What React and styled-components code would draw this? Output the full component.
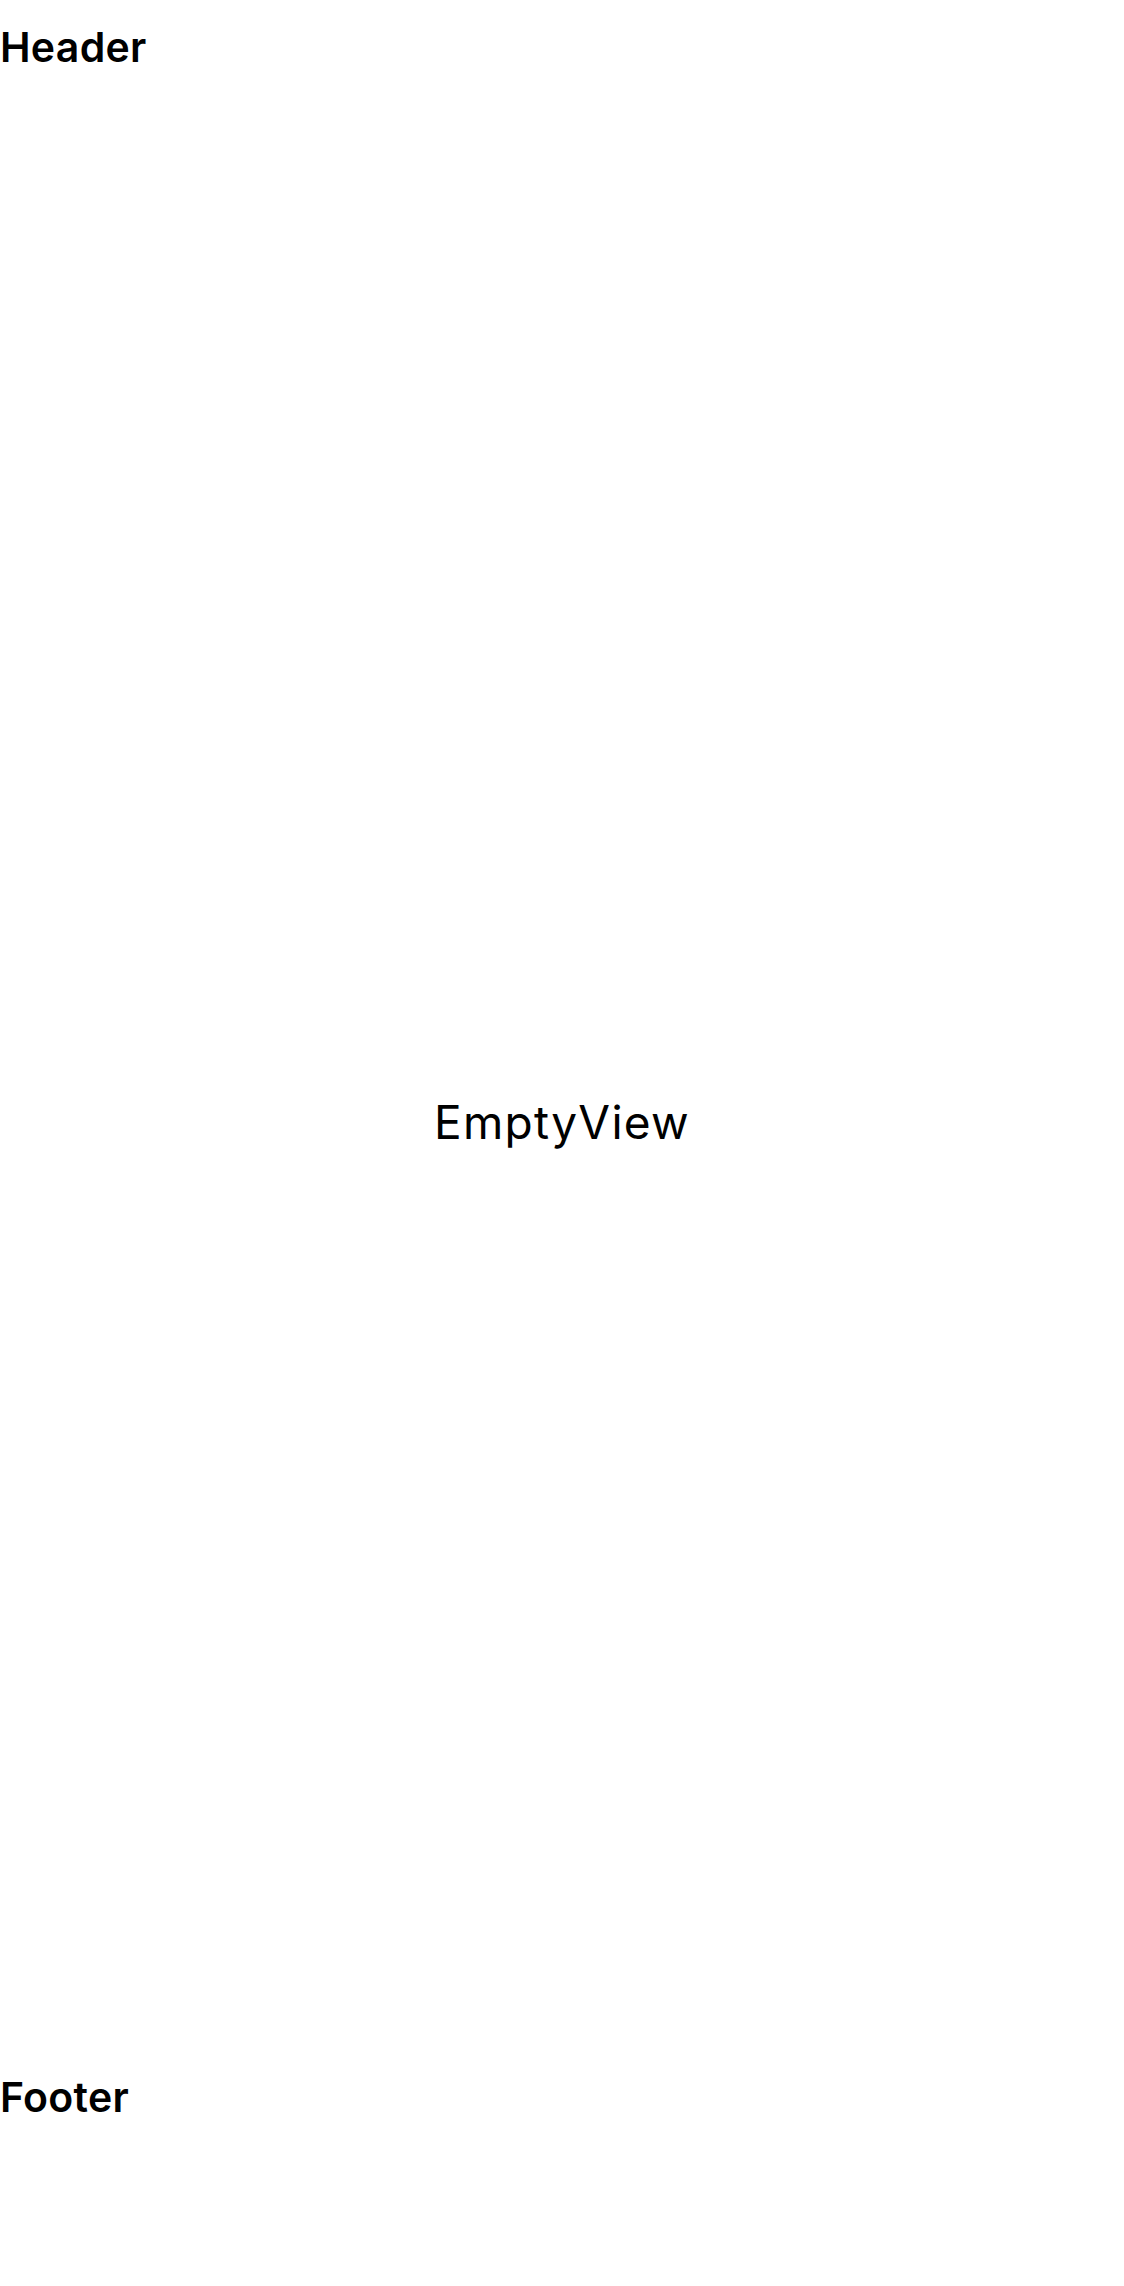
import React from 'react';
import styled, { createGlobalStyle } from 'styled-components';

const GlobalStyle = createGlobalStyle`
  html, body {
    margin: 0;
    padding: 0;
    background: #ffffff;
  }
  body {
    font-family: Inter, "Noto Sans", sans-serif;
    color: #000000;
  }
`;

const Screen = styled.div`
  display: flex;
  flex-direction: column;
  width: 1124px;
  height: 2286px;
  background: #ffffff;
`;

const Bar = styled.div`
  font-size: 41px;
  font-weight: 600;
  line-height: normal;
  letter-spacing: 0.3px;
  padding-top: ${(p) => p.$top || 0}px;
  padding-bottom: ${(p) => p.$bottom || 0}px;
`;

const Main = styled.main`
  flex: 1;
  display: flex;
  align-items: center;
  justify-content: center;
  padding-top: 100px;
`;

const EmptyText = styled.div`
  font-size: 46px;
  font-weight: 400;
  line-height: normal;
  letter-spacing: 1.3px;
`;

const App = () => (
  <>
    <GlobalStyle />
    <Screen>
      <Bar $top={22}>Header</Bar>
      <Main>
        <EmptyText>EmptyView</EmptyText>
      </Main>
      <Bar $bottom={164}>Footer</Bar>
    </Screen>
  </>
);

export default App;
